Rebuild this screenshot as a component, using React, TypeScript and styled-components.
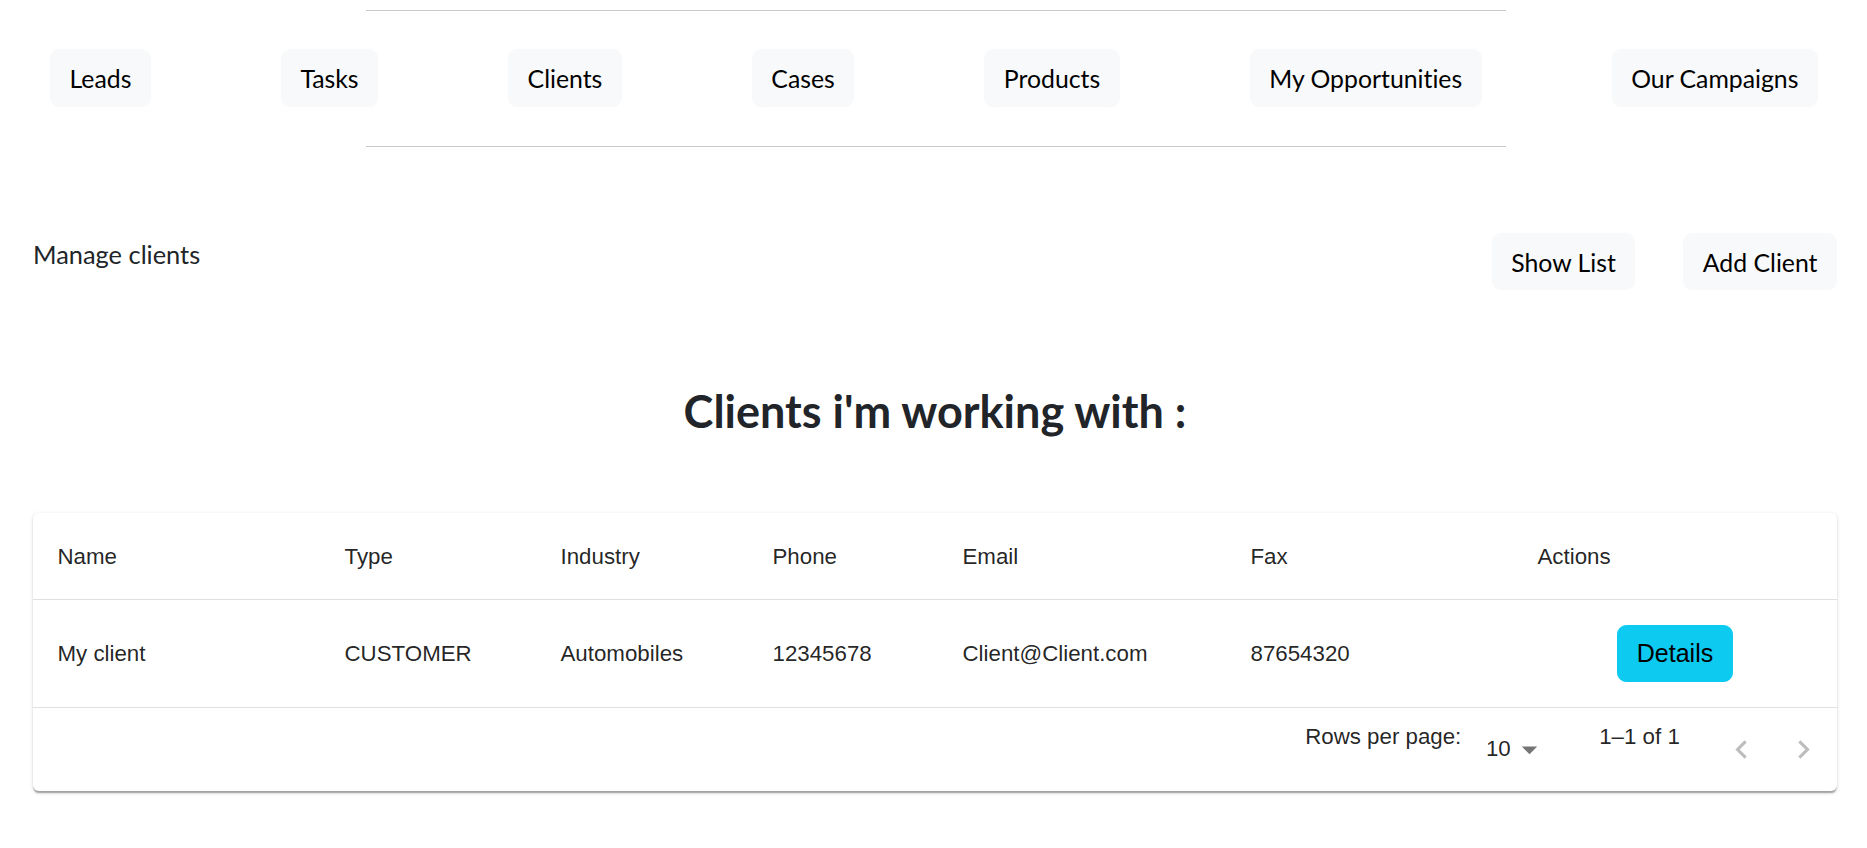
import React from "react";
import styled, { createGlobalStyle } from "styled-components";

const GlobalStyle = createGlobalStyle`
  html, body { margin: 0; padding: 0; background: #ffffff; }
  body {
    font-family: Lato, "Open Sans", sans-serif;
    color: #212529;
    font-variant-ligatures: no-common-ligatures;
    -webkit-font-smoothing: antialiased;
  }
  *, *::before, *::after { box-sizing: border-box; }
`;

const Page = styled.div`
  width: 1867px;
  min-height: 848px;
`;

const NavSection = styled.header`
  padding-top: 10px;
`;

const Divider = styled.hr`
  width: 1140px;
  margin: 0 auto;
  border: 0;
  border-top: 1px solid #c8c9c9;
  position: relative;
  left: 2px;
`;

const NavRow = styled.nav`
  display: flex;
  align-items: center;
  gap: 130px;
  padding: 38px 0 39px 50px;
`;

const LightButton = styled.button`
  font-family: Lato, "Open Sans", sans-serif;
  font-variant-ligatures: no-common-ligatures;
  font-size: 24.8px;
  line-height: 37px;
  padding: 10px 18.5px 8.5px;
  border: 1px solid #f8f9fa;
  background: #f8f9fa;
  border-radius: 9.2px;
  color: #000;
  white-space: nowrap;
  cursor: pointer;
`;

const Main = styled.main`
  padding: 0 30px 0 33px;
`;

const ActionBar = styled.div`
  margin-top: 86px;
  display: flex;
  justify-content: space-between;
  align-items: flex-start;
`;

const Subtitle = styled.p`
  margin: 3px 0 0;
  font-size: 25.4px;
  line-height: 37px;
  color: #212529;
`;

const ActionGroup = styled.div`
  display: flex;
  gap: 48px;
`;

const Title = styled.h2`
  margin: 94px 0 0;
  text-align: center;
  font-size: 45px;
  font-weight: 700;
  line-height: 54px;
  color: #212529;
`;

const Card = styled.section`
  margin-top: 75px;
  background: #fff;
  border-radius: 6px;
  overflow: hidden;
  box-shadow: 0 3px 1.5px -1.5px rgba(0, 0, 0, 0.2),
    0 1.5px 1.5px 0 rgba(0, 0, 0, 0.14), 0 1.5px 4.6px 0 rgba(0, 0, 0, 0.12);
`;

const Table = styled.table`
  width: 100%;
  border-collapse: collapse;
  table-layout: fixed;
  font-family: "Liberation Sans", Arial, sans-serif;
`;

const Col = styled.col<{ $w: number }>`
  width: ${(p) => p.$w}px;
`;

const HeadCell = styled.th`
  text-align: left;
  padding: 24.5px;
  font-size: 22.3px;
  line-height: 37px;
  font-weight: 500;
  color: rgba(0, 0, 0, 0.87);
  border-bottom: 1px solid rgb(224, 224, 224);
`;

const BodyCell = styled.td`
  text-align: left;
  padding: 24.5px;
  font-size: 22.3px;
  line-height: 37px;
  font-weight: 400;
  color: rgba(0, 0, 0, 0.87);
  border-bottom: 1px solid rgb(224, 224, 224);
  vertical-align: middle;
`;

const ActionWrap = styled.div`
  display: flex;
  justify-content: center;
`;

const DetailsButton = styled.button`
  font-family: "Liberation Sans", Arial, sans-serif;
  font-size: 25px;
  line-height: 37px;
  padding: 9.25px 18.5px;
  border: 1px solid #0dcaf0;
  background: #0dcaf0;
  border-radius: 9.2px;
  color: #000;
  cursor: pointer;
`;

const Toolbar = styled.div`
  display: flex;
  align-items: center;
  justify-content: flex-end;
  height: 83px;
  padding-right: 3px;
  font-family: "Liberation Sans", Arial, sans-serif;
  font-size: 22.3px;
  color: rgba(0, 0, 0, 0.87);
`;

const PagText = styled.p`
  margin: 0 0 24.6px;
  line-height: 1.43;
  white-space: nowrap;
`;

const SelectBox = styled.div`
  display: flex;
  align-items: center;
  margin: 0 51.5px 0 12.3px;
  padding-left: 12.3px;
  line-height: 1.4375em;
`;

const PagActions = styled.div`
  display: flex;
  margin-left: 31px;
`;

const PageButton = styled.button`
  width: 61.6px;
  height: 61.6px;
  display: flex;
  align-items: center;
  justify-content: center;
  border: 0;
  padding: 0;
  background: none;
`;

const navItems = [
  "Leads",
  "Tasks",
  "Clients",
  "Cases",
  "Products",
  "My Opportunities",
  "Our Campaigns",
];

const columns = [
  { label: "Name", w: 287 },
  { label: "Type", w: 216 },
  { label: "Industry", w: 212 },
  { label: "Phone", w: 190 },
  { label: "Email", w: 288 },
  { label: "Fax", w: 287 },
  { label: "Actions", w: 324 },
];

const rows = [
  {
    name: "My client",
    type: "CUSTOMER",
    industry: "Automobiles",
    phone: "12345678",
    email: "Client@Client.com",
    fax: "87654320",
  },
];

const Icon = ({ d, color }: { d: string; color: string }) => (
  <svg width="37" height="37" viewBox="0 0 24 24" fill={color} aria-hidden="true">
    <path d={d} />
  </svg>
);

export default function App() {
  return (
    <Page>
      <GlobalStyle />
      <NavSection>
        <Divider />
        <NavRow>
          {navItems.map((n) => (
            <LightButton key={n}>{n}</LightButton>
          ))}
        </NavRow>
        <Divider />
      </NavSection>
      <Main>
        <ActionBar>
          <Subtitle>Manage clients</Subtitle>
          <ActionGroup>
            <LightButton>Show List</LightButton>
            <LightButton>Add Client</LightButton>
          </ActionGroup>
        </ActionBar>
        <Title>Clients i'm working with :</Title>
        <Card>
          <Table>
            <colgroup>
              {columns.map((c) => (
                <Col key={c.label} $w={c.w} />
              ))}
            </colgroup>
            <thead>
              <tr>
                {columns.map((c) => (
                  <HeadCell key={c.label}>{c.label}</HeadCell>
                ))}
              </tr>
            </thead>
            <tbody>
              {rows.map((r) => (
                <tr key={r.name}>
                  <BodyCell>{r.name}</BodyCell>
                  <BodyCell>{r.type}</BodyCell>
                  <BodyCell>{r.industry}</BodyCell>
                  <BodyCell>{r.phone}</BodyCell>
                  <BodyCell>{r.email}</BodyCell>
                  <BodyCell>{r.fax}</BodyCell>
                  <BodyCell>
                    <ActionWrap>
                      <DetailsButton>Details</DetailsButton>
                    </ActionWrap>
                  </BodyCell>
                </tr>
              ))}
            </tbody>
          </Table>
          <Toolbar>
            <PagText>Rows per page:</PagText>
            <SelectBox>
              <span>10</span>
              <Icon d="M7 10l5 5 5-5z" color="rgba(0,0,0,0.54)" />
            </SelectBox>
            <PagText>1–1 of 1</PagText>
            <PagActions>
              <PageButton aria-label="previous page" disabled>
                <Icon d="M15.41 7.41 14 6l-6 6 6 6 1.41-1.41L10.83 12z" color="rgba(0,0,0,0.26)" />
              </PageButton>
              <PageButton aria-label="next page" disabled>
                <Icon d="M10 6 8.59 7.41 13.17 12l-4.58 4.59L10 18l6-6z" color="rgba(0,0,0,0.26)" />
              </PageButton>
            </PagActions>
          </Toolbar>
        </Card>
      </Main>
    </Page>
  );
}
